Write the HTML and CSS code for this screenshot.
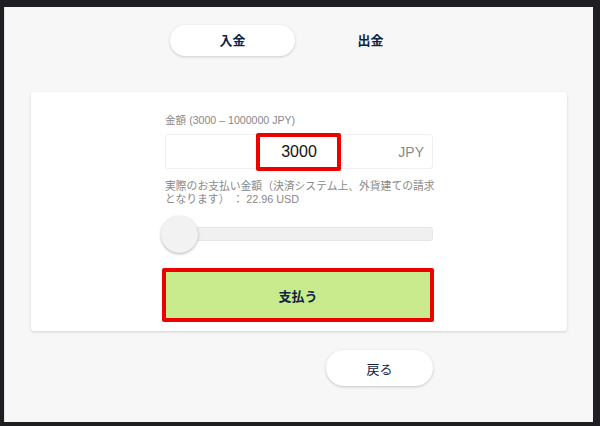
FILE: index.html
```html
<!DOCTYPE html>
<html lang="ja">
<head>
<meta charset="utf-8">
<link rel="stylesheet" href="styles.css">
</head>
<body>
<div class="frame">
  <div class="tabs">
    <div class="tab active">入金</div>
    <div class="tab">出金</div>
  </div>
  <div class="card">
    <div class="col">
      <div class="label">金額 (3000 – 1000000 JPY)</div>
      <div class="input">
        <span class="value">3000</span>
        <span class="unit">JPY</span>
        <span class="mark"></span>
      </div>
      <div class="desc">実際のお支払い金額（決済システム上、外貨建ての請求<br>となります） ： 22.96 USD</div>
      <div class="slider">
        <div class="track"></div>
        <div class="thumb"></div>
      </div>
      <button class="pay">支払う</button>
    </div>
  </div>
  <div class="backrow">
    <button class="back">戻る</button>
  </div>
</div>
</body>
</html>
```
FILE: styles.css
```css
* { box-sizing: border-box; }
html, body { margin: 0; padding: 0; }
body {
  background: #1f1f23;
  width: 600px;
  height: 426px;
  overflow: hidden;
  font-family: "Liberation Sans", "Noto Sans CJK JP", sans-serif;
}
.frame {
  margin: 7px 7px 0 4px;
  height: 415px;
  background: #f7f7f7;
  border-left: 1px solid #e4e4e4;
  padding-top: 18px;
}
.tabs {
  display: flex;
  gap: 13px;
  margin-left: 165px;
}
.tab {
  width: 125px;
  height: 31px;
  border-radius: 16px;
  display: flex;
  align-items: center;
  justify-content: center;
  font-family: "Noto Sans CJK JP", sans-serif;
  font-weight: bold;
  font-size: 13px;
  color: #0e2442;
  padding-bottom: 2px;
}
.tab.active {
  background: #fff;
  box-shadow: 0 1px 3px rgba(0,0,0,0.18);
}
.card {
  margin: 36px 26px 0 26px;
  height: 239px;
  background: #fff;
  border-radius: 3px;
  box-shadow: 0 1px 3px rgba(0,0,0,0.15);
  padding-top: 21px;
}
.col {
  width: 268px;
  margin: 0 auto;
  display: flex;
  flex-direction: column;
}
.label {
  font-size: 10.6px;
  line-height: 14px;
  color: #888;
}
.input {
  position: relative;
  margin-top: 7px;
  height: 35px;
  border: 1px solid #f0f0f0;
  border-radius: 3px;
  display: flex;
  align-items: center;
}
.value {
  position: absolute;
  left: 91px;
  width: 84px;
  text-align: center;
  font-size: 16px;
  color: #111;
}
.unit {
  margin-left: auto;
  margin-right: 8px;
  font-size: 14px;
  color: #8a8a8a;
}
.mark {
  position: absolute;
  left: 90px;
  top: -2px;
  width: 85px;
  height: 38px;
  border: 4px solid #ee0000;
  border-radius: 2px;
}
.desc {
  margin-top: 11px;
  font-size: 10.8px;
  line-height: 13px;
  color: #888;
  white-space: nowrap;
}
.slider {
  position: relative;
  margin-top: 19px;
  height: 18px;
}
.track {
  position: absolute;
  left: 0;
  right: 0;
  top: 2px;
  height: 14px;
  background: #f0f0f0;
  border: 1px solid #e6e6e6;
  border-radius: 3px;
}
.thumb {
  position: absolute;
  left: -4px;
  top: -9px;
  width: 37px;
  height: 37px;
  border-radius: 50%;
  background: #f2f2f2;
  box-shadow: 0 1px 3px rgba(0,0,0,0.3);
}
.pay {
  margin: 25px 0 0 -3px;
  width: 272px;
  height: 54px;
  border: 4px solid #ee0000;
  border-radius: 2px;
  background: #c9eb8e;
  font-family: "Noto Sans CJK JP", sans-serif;
  font-weight: bold;
  font-size: 13px;
  color: #0e2442;
  padding: 0;
}
.backrow {
  width: 268px;
  margin: 19px auto 0 auto;
  display: flex;
  justify-content: flex-end;
}
.back {
  width: 107px;
  height: 36px;
  border: none;
  border-radius: 18px;
  background: #fff;
  box-shadow: 0 1px 3px rgba(0,0,0,0.2);
  font-family: "Noto Sans CJK JP", sans-serif;
  font-size: 13px;
  color: #0e2442;
  padding: 0;
}
```
